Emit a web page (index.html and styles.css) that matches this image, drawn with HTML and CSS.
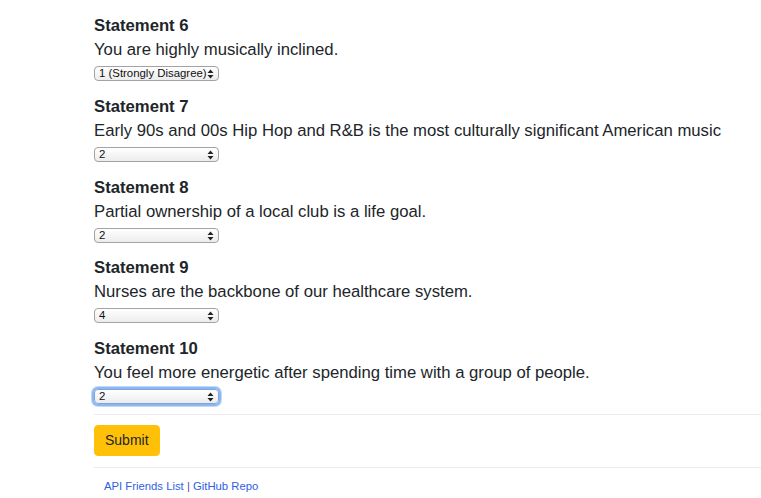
FILE: index.html
```html
<!DOCTYPE html>
<html>
<head>
<meta charset="utf-8">
<link rel="stylesheet" href="styles.css">
</head>
<body>
<main class="page">
  <form class="quiz">
    <div class="question">
      <h5 class="q-title">Statement 6</h5>
      <p class="q-text">You are highly musically inclined.</p>
      <span class="select-wrap">
        <select class="q-select"><option>1 (Strongly Disagree)</option></select>
        <svg class="arrows" width="7" height="10" viewBox="0 0 7 10"><path d="M3.5 0.5 L6.5 4 L0.5 4 Z M3.5 9.5 L6.5 6 L0.5 6 Z" fill="#222"/></svg>
      </span>
    </div>
    <div class="question">
      <h5 class="q-title">Statement 7</h5>
      <p class="q-text">Early 90s and 00s Hip Hop and R&amp;B is the most culturally significant American music</p>
      <span class="select-wrap">
        <select class="q-select"><option>2</option></select>
        <svg class="arrows" width="7" height="10" viewBox="0 0 7 10"><path d="M3.5 0.5 L6.5 4 L0.5 4 Z M3.5 9.5 L6.5 6 L0.5 6 Z" fill="#222"/></svg>
      </span>
    </div>
    <div class="question">
      <h5 class="q-title">Statement 8</h5>
      <p class="q-text">Partial ownership of a local club is a life goal.</p>
      <span class="select-wrap">
        <select class="q-select"><option>2</option></select>
        <svg class="arrows" width="7" height="10" viewBox="0 0 7 10"><path d="M3.5 0.5 L6.5 4 L0.5 4 Z M3.5 9.5 L6.5 6 L0.5 6 Z" fill="#222"/></svg>
      </span>
    </div>
    <div class="question">
      <h5 class="q-title">Statement 9</h5>
      <p class="q-text">Nurses are the backbone of our healthcare system.</p>
      <span class="select-wrap">
        <select class="q-select"><option>4</option></select>
        <svg class="arrows" width="7" height="10" viewBox="0 0 7 10"><path d="M3.5 0.5 L6.5 4 L0.5 4 Z M3.5 9.5 L6.5 6 L0.5 6 Z" fill="#222"/></svg>
      </span>
    </div>
    <div class="question last">
      <h5 class="q-title">Statement 10</h5>
      <p class="q-text">You feel more energetic after spending time with a group of people.</p>
      <span class="select-wrap">
        <select class="q-select focused"><option>2</option></select>
        <svg class="arrows" width="7" height="10" viewBox="0 0 7 10"><path d="M3.5 0.5 L6.5 4 L0.5 4 Z M3.5 9.5 L6.5 6 L0.5 6 Z" fill="#222"/></svg>
      </span>
    </div>
    <hr class="rule first">
    <button type="button" class="btn-submit">Submit</button>
    <hr class="rule second">
  </form>
  <footer class="footer">
    <a class="link" href="#">API Friends List</a> <span class="sep">|</span> <a class="link" href="#">GitHub Repo</a>
  </footer>
</main>
</body>
</html>
```

FILE: styles.css
```css
html, body {
  margin: 0;
  padding: 0;
  background: #fff;
}

body {
  font-family: "Liberation Sans", Arial, Helvetica, sans-serif;
  color: #212529;
  overflow: hidden;
}

.page {
  padding-left: 94px;
  padding-top: 14px;
}

.quiz {
  display: flex;
  flex-direction: column;
  align-items: flex-start;
}

.question {
  display: flex;
  flex-direction: column;
  align-items: flex-start;
  height: 80.75px;
}

.question.last {
  height: auto;
}

.q-title {
  margin: 0;
  font-size: 16.7px;
  font-weight: bold;
  line-height: 24px;
  color: #212529;
}

.q-text {
  margin: 0;
  font-size: 16.7px;
  line-height: 24px;
  white-space: nowrap;
}

.select-wrap {
  position: relative;
  display: inline-block;
  margin-top: 4px;
  line-height: 0;
}

.q-select {
  -webkit-appearance: none;
  appearance: none;
  width: 125px;
  height: 15px;
  margin: 0;
  padding: 0 0 0 4px;
  border: 1px solid #a3a3a3;
  border-radius: 4px;
  background: linear-gradient(#ffffff, #ececec);
  font-family: "Liberation Sans", Arial, sans-serif;
  font-size: 11.4px;
  line-height: 13px;
  color: #111;
  box-sizing: border-box;
  outline: none;
}

.q-select.focused {
  box-shadow: 0 0 0 2px #8db8ef, 0 0 0 3px #c2daf7;
  border-color: #7aa6e0;
}

.arrows {
  position: absolute;
  right: 5px;
  top: 3px;
}

.rule {
  align-self: stretch;
  margin: 0;
  border: 0;
  border-top: 1px solid #ececec;
  height: 0;
}

.rule.first {
  margin-top: 10px;
}

.btn-submit {
  margin-top: 10px;
  margin-bottom: 11px;
  padding: 5px 10px;
  border: 1px solid #ffc107;
  border-radius: 4px;
  background: #ffc107;
  color: #212529;
  font-family: "Liberation Sans", Arial, sans-serif;
  font-size: 14px;
  line-height: 19px;
  cursor: pointer;
}

.footer {
  padding-left: 10px;
  padding-top: 11px;
  font-size: 11.3px;
  line-height: 14px;
}

.link {
  color: #2f5fe3;
  text-decoration: none;
}

.sep {
  color: #5a3fa8;
}
```
